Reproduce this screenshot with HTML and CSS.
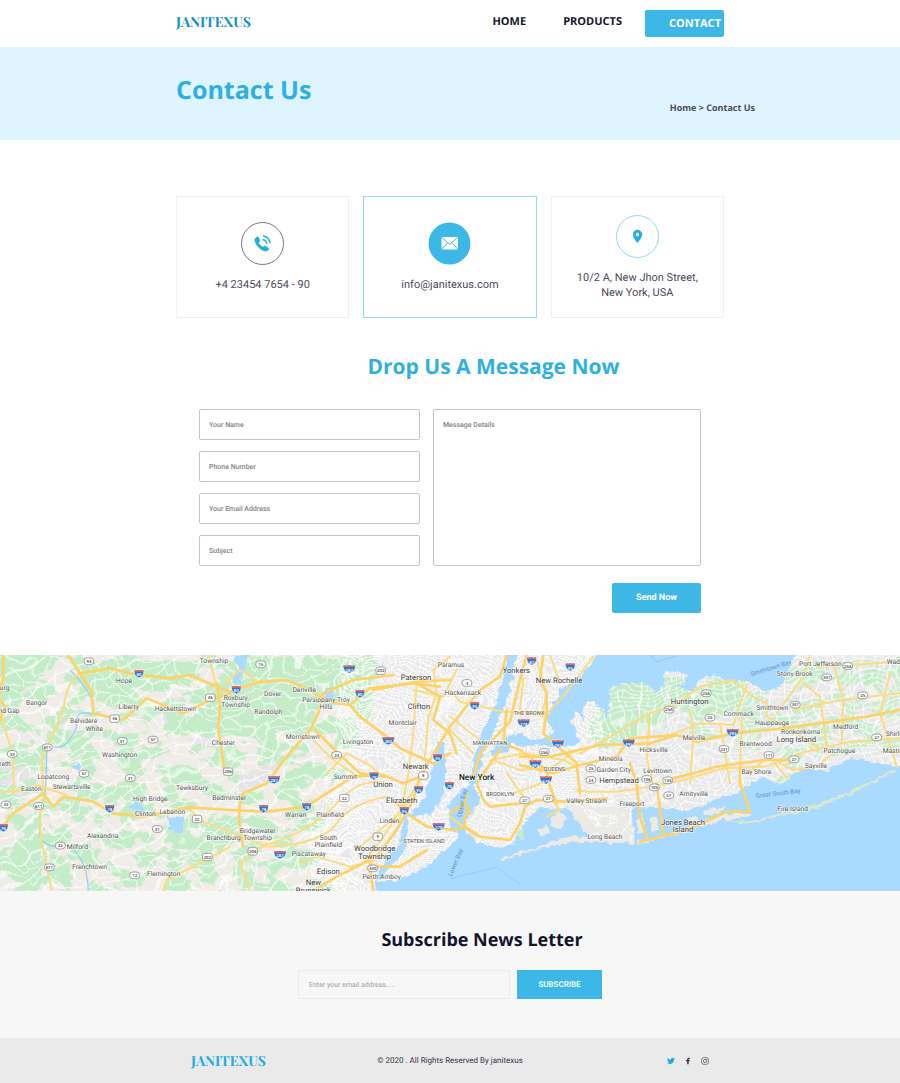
FILE: index.html
```html
<!DOCTYPE html>
<html lang="en">
<head>
<meta charset="utf-8">
<meta name="viewport" content="width=device-width, initial-scale=1">
<title>Janitexus - Contact Us</title>
<link rel="stylesheet" href="styles.css">
</head>
<body>
<header class="header">
  <div class="container header-row">
    <a class="logo logo-top" href="#">JANITEXUS</a>
    <nav class="nav">
      <a href="#">HOME</a>
      <a href="#">PRODUCTS</a>
      <a class="nav-button" href="#">CONTACT</a>
    </nav>
  </div>
</header>
<main>
  <section class="banner">
    <div class="container banner-row">
      <h1 class="banner-title">Contact Us</h1>
      <p class="crumbs"><a href="#">Home</a> &gt; Contact Us</p>
    </div>
  </section>

  <section class="container cards">
    <article class="card">
      <svg class="card-icon" viewBox="0 0 43 43" aria-hidden="true">
        <circle cx="21.500" cy="21.500" r="21" fill="#fff" stroke="#77757f"/>
        <path d="M15.300 15.600c-2 1.300-1.500 4.100.1 6.700 2 3.300 5 5.900 8.300 6.600 1.900.4 3.500-.5 3.900-1.700.1-.5 0-.8-.4-1.100l-3-1.800c-.5-.3-1-.2-1.400.2l-.8.8c-2-.8-3.800-2.700-4.600-4.700l.9-.7c.5-.4.6-.8.4-1.400l-1.200-3c-.4-.8-1.400-.6-2.200.1z" fill="#22ace1" stroke="#22ace1" stroke-width=".8"/>
        <path d="M21.500 17.500c2.600.4 3.800 2 4.200 4.300M22 14c4.400.6 6.700 3.300 7.200 7.300" fill="none" stroke="#22ace1" stroke-width="1.300"/>
      </svg>
      <p>+4 23454 7654 - 90</p>
    </article>
    <article class="card card-active">
      <svg class="card-icon" viewBox="0 0 43 43" aria-hidden="true">
        <circle cx="21.500" cy="21.500" r="21" fill="#3db7e6"/>
        <rect x="13.500" y="15" width="16.500" height="12.500" rx="1" fill="#fff"/>
        <path d="M14 15.500l7.800 7 7.800-7M14 27l5.600-6.300M29.600 27L24 20.700" fill="none" stroke="#3db7e6"/>
      </svg>
      <p>info@janitexus.com</p>
    </article>
    <article class="card">
      <svg class="card-icon" viewBox="0 0 43 43" aria-hidden="true">
        <circle cx="21.500" cy="21.500" r="21" fill="#fff" stroke="#94d9f3"/>
        <path d="M21.500 14.800a4.600 4.600 0 0 0-4.600 4.600c0 3.200 4.600 8.600 4.600 8.600s4.600-5.400 4.600-8.600a4.600 4.600 0 0 0-4.600-4.600zm0 6.500a1.800 1.800 0 1 1 0-3.600 1.800 1.800 0 0 1 0 3.600z" fill="#22ace1"/>
      </svg>
      <p>10/2 A, New Jhon Street,<br>New York, USA</p>
    </article>
  </section>

  <section class="message">
    <h2 class="message-title">Drop Us A Message Now</h2>
    <form class="message-form">
      <div class="message-fields">
        <input type="text" placeholder="Your Name" aria-label="Your Name">
        <input type="tel" placeholder="Phone Number" aria-label="Phone Number">
        <input type="email" placeholder="Your Email Address" aria-label="Your Email Address">
        <input type="text" placeholder="Subject" aria-label="Subject">
      </div>
      <textarea placeholder="Message Details" aria-label="Message Details"></textarea>
      <button class="send" type="submit">Send Now</button>
    </form>
  </section>

  <svg class="map" viewBox="0 15 2700 708" role="img" aria-label="Map of New York and surroundings">
    <defs>
      <filter id="patches" x="0" y="0" width="100%" height="100%" color-interpolation-filters="sRGB">
        <feTurbulence type="fractalNoise" baseFrequency="0.014 0.020" numOctaves="3" seed="8"/>
        <feColorMatrix values="0 0 0 0 .77  0 0 0 0 .925  0 0 0 0 .785  16 0 0 0 -7.500"/>
        <feComposite in2="SourceGraphic" operator="in"/>
      </filter>
      <filter id="wobble" x="0" y="0" width="100%" height="100%" color-interpolation-filters="sRGB">
        <feTurbulence type="fractalNoise" baseFrequency="0.009" numOctaves="2" seed="4"/>
        <feDisplacementMap in="SourceGraphic" scale="130" xChannelSelector="R" yChannelSelector="G"/>
      </filter>
      <filter id="coast" x="-5%" y="-5%" width="110%" height="110%" color-interpolation-filters="sRGB">
        <feTurbulence type="fractalNoise" baseFrequency="0.045" numOctaves="2" seed="2"/>
        <feDisplacementMap in="SourceGraphic" scale="22" xChannelSelector="R" yChannelSelector="G"/>
      </filter>
      <pattern id="rural" width="84" height="70" patternUnits="userSpaceOnUse" patternTransform="rotate(-28)">
        <path d="M0 12h84M20 0v36M20 36L60 70M60 0V44H84M0 50L20 36" fill="none" stroke="#fff" stroke-width="3"/>
      </pattern>
      <pattern id="urban" width="26" height="22" patternUnits="userSpaceOnUse" patternTransform="rotate(22)">
        <path d="M0 4h26M8 0v22M0 15h26M21 4v11" fill="none" stroke="#fff" stroke-width="3"/>
      </pattern>
      <pattern id="suburb" width="46" height="38" patternUnits="userSpaceOnUse" patternTransform="rotate(-9)">
        <path d="M0 6h46M13 0v38M0 26h46M35 6v20" fill="none" stroke="#fff" stroke-width="3"/>
      </pattern>
      <g id="interstate">
        <path d="M-13-12q6 3 13 0q7 3 13 0q6 17-13 25q-19-8-13-25z" fill="#3276c8" stroke="#fff" stroke-width="2"/>
        <path d="M-13-12q6 3 13 0q7 3 13 0l1 6h-28z" fill="#df6960"/>
      </g>
      <g id="interstate-wide">
        <path d="M-17-12q9 3 17 0q8 3 17 0q6 17-17 25q-23-8-17-25z" fill="#3276c8" stroke="#fff" stroke-width="2"/>
        <path d="M-17-12q9 3 17 0q8 3 17 0l1 6h-36z" fill="#df6960"/>
      </g>
      <rect id="oval" x="-15" y="-10" width="30" height="20" rx="10" fill="#fff" stroke="#777" stroke-width="2"/>
      <rect id="badge" x="-14" y="-11" width="28" height="22" rx="6" fill="#fff" stroke="#777" stroke-width="2"/>
    </defs>

    <rect y="15" width="2700" height="708" fill="#f0ede8"/>
    <path d="M1060 15H2700V723H1060L1000 560 960 440 1060 300z" fill="#e9e9ea"/>
    <g fill="#e5e5e8">
      <path d="M0 300L60 300 90 370 130 420 60 450 0 430z"/>
      <path d="M480 210l60-60 20 20-50 55zM560 265h115v30H580z"/>
    </g>

    <g filter="url(#coast)" fill="#c5ebc9">
      <path d="M0 15H190L150 60 80 110 20 180-10 190z"/>
      <path d="M675 60L760 20H1140L1130 60 1080 120 1110 170 960 150 930 250 830 200 780 265 600 255 560 220 640 150z"/>
      <path d="M230 40L330 30 600 35 560 100 400 110 350 180 290 150z"/>
      <path d="M50 580l60-30 30 70-20 90-70-10-50-40zM620 560l60-40 40 30-60 60z"/>
      <path d="M860 365l70-30 40 10-70 50-60 10zM1020 220l60 20-30 60-50-20z"/>
      <path d="M1820 110l120-30 60 30-10 90-100 70-90 30-40-60zM2000 80l60 0 20 70 60-60 100 0-30 90-120 20-80-30z"/>
      <path d="M2350 290l50 10 10 60-60-10zM2590 60l60 0v50h-60zM2420 40l60-10 0 60-50 10z"/>
      <path d="M2330 385l50-15-10 40-40 0z"/>
    </g>
    <path d="M0 15H1160L1100 230 1000 440 960 560 1000 723H0z" fill="#c5ebc9" filter="url(#patches)"/>
    <path d="M1820 90L2020 80 2160 70 2700 20V300L2400 330 2000 240 1780 280z" fill="#c5ebc9" filter="url(#patches)" opacity=".75"/>
    <path d="M720 380l100-50 20 25-70 65-60 10z" fill="#e5e5e8" filter="url(#coast)"/>

    <g filter="url(#wobble)">
      <rect x="-100" y="-60" width="1190" height="880" fill="url(#rural)"/>
      <path d="M1060-60H1800V320L1850 300V520L1700 820H960L940 560 1000 350z" fill="url(#urban)"/>
      <path d="M1780-60H2850V600H1780z" fill="url(#suburb)"/>
    </g>

    <g filter="url(#coast)" fill="#aadaff">
      <path d="M1795 5L1775 40 1720 95 1680 120 1660 160 1640 205 1660 245 1640 265 1600 270 1560 250 1530 275 1560 290 1600 285 1660 290 1700 290 1740 275 1712 210 1730 185 1755 205 1745 165 1780 152 1810 180 1820 210 1832 112 1860 102 1930 98 1970 125 1992 110 1998 60 2065 75 2055 100 2020 105 2080 125 2100 90 2140 70 2190 95 2250 90 2290 125 2330 115 2355 80 2390 5z"/>
      <path d="M1525 5L1556 5 1538 70 1525 150 1490 220 1448 310 1438 370 1422 410 1440 450 1420 490 1395 508 1390 545 1430 575 1500 592 1540 582 1562 530 1620 472 1655 480 1700 470 1740 520 1790 570 1900 582 1900 470 2070 482 2150 450 2225 420 2280 380 2345 404 2380 372 2410 355 2480 360 2560 325 2720 355V745H1130L1125 695 1190 692 1240 672 1290 640 1350 590 1380 545 1345 535 1348 500 1345 470 1360 440 1410 400 1420 330 1450 230 1490 160z"/>
      <path d="M1315 280l15-5 10 70-10 90-40 60-70 8 50-50 25-85z"/>
      <path d="M1210 500l14 0-5 100-40 40-40 50-14 0 34-60 40-50z"/>
      <path d="M1470 320l40-10 40-45-5-20-30 25-25 10zM700 15h48l-30 90-20-5 15-50zM975 120l22-10 5 30-15 30-15-10z"/>
      <path d="M500 500l55 5-15 45-30-10zM385 470l20-18 30 20-10 30zM212 350l20-14 12 15-10 12z"/>
    </g>
    <path d="M210 60Q270 120 278 160T270 190Q220 180 230 230 200 300 165 290M140 290Q140 420 130 450 115 480 120 560 140 600 195 585 260 610 265 720" fill="none" stroke="#9dcff3" stroke-width="4"/>

    <g filter="url(#coast)" fill="#eceae4">
      <path d="M1502 625L1620 588 1710 558 1900 572 1900 580 1720 575 1600 600 1510 632z"/>
      <path d="M1905 580L1990 555 2180 490 2250 488 2248 498 2130 520 2000 562 1920 582z"/>
      <path d="M2180 512L2240 515 2350 490 2450 465 2560 420 2690 355V362L2560 430 2450 475 2340 500 2240 522z" fill="#dbe8cf"/>
      <path d="M1650 500l30-20 15 25-15 35-20-10zM1620 540l20-20 10 30-30 10zM1800 500l30 5-5 20-20 5zM1850 490l40 20-10 30-30-10zM1910 510l15-20 10 50-20 10zM1950 500l20 0 5 40-20 10zM2060 500l30-5 5 20-30 5zM2110 480l60-10-10 20-50 10zM1700 460l40 10 50 60 60 0 40 40-60 0-80-30zM1760 470l130 0 0 20-90 5z"/>
      <path d="M1547 543l18-8 8 30-14 10z" fill="#c5ebc9"/>
    </g>

    <g class="road-thin">
      <path d="M0 185L40 320V430M0 425L100 420 110 405 200 435M240 70Q200 90 190 180L145 285 125 330 130 430M130 440Q110 520 130 600L155 723M625 15L650 110M675 100L720 60 780 100"/>
      <path d="M570 480L610 515 690 545 800 590M490 723L500 690 620 630 690 590M800 580L720 640 750 723"/>
      <path d="M980 370L1040 310 1100 340 1150 380M940 270L1000 330 1060 370M800 585Q940 540 1010 460T1160 400M810 590Q970 580 1010 520T1160 440"/>
      <path d="M900 640L950 620 1050 650 1090 640 1150 560 1260 390M1080 590L1210 480 1290 330M1100 660L1195 530 1225 370 1240 250 1250 100"/>
      <path d="M1275 320L1285 200 1310 130 1300 60 1350 20M1240 120L1330 140 1370 60M1350 120L1380 155 1510 185 1640 190"/>
      <path d="M1470 330L1570 310 1690 330 1730 350M1480 330L1560 360 1660 350 1730 300M1520 370L1570 440M1650 390L1540 430"/>
      <path d="M1570 85L1560 180 1630 200 1690 140 1780 20M1610 30L1640 130 1625 200M1650 15L1680 100"/>
      <path d="M1350 240L1420 310M1350 200L1440 270M1650 440L1680 480 1640 500"/>
      <path d="M1730 420L1760 425 1850 425 1950 410 2050 390 2170 355 2300 350 2400 310 2550 275 2700 265"/>
      <path d="M1740 310L1830 260 1950 190 2030 160 2100 110 2200 90 2260 140 2300 160M1950 190L1940 320 1960 410"/>
      <path d="M2010 255L2100 220 2200 225 2240 105M2070 180L2080 260 2070 400M2160 220L2190 400M2225 200L2220 380M2300 150V200L2390 250 2450 290"/>
      <path d="M2330 190L2410 80 2430 15M2410 100L2460 140 2480 290M2500 40L2530 150 2525 280M2380 180L2520 150 2700 130M2450 50L2700 35M2670 70L2640 190 2690 350"/>
      <path d="M2240 370L2310 320 2360 385M2340 340L2380 360 2450 350 2500 310M1350 500L1430 560"/>
    </g>
    <g class="road">
      <path d="M205 15L240 70 275 125 280 190 370 210 440 145 550 190 640 145 690 130"/>
      <path d="M240 70L330 55 400 72 510 85 570 75 650 110 690 125 780 95 860 90 930 120 980 155 1050 165 1110 115 1240 100 1320 110"/>
      <path d="M0 540L40 490 130 430 160 470 190 440 280 455 340 490 430 500 570 472 690 480 800 485 920 470 980 430 1060 380 1150 375 1210 400 1260 380"/>
      <path d="M10 15V80L0 130M0 150L15 170 0 210M650 100L660 160 655 240 675 370"/>
      <path d="M730 590Q705 480 730 430L800 400 860 320 930 240 955 190 970 130 1060 90 1180 75"/>
      <path d="M945 240L1020 315 1080 370 1160 380M1050 165L1080 200 1160 260 1200 295 1300 340 1350 310"/>
      <path d="M1290 330L1350 230 1440 120 1500 80 1520 15M1120 120L1250 95 1350 90M1250 100L1320 140 1300 210 1350 250 1370 310"/>
      <path d="M940 722L1010 680 1080 645 1130 620 1190 540 1240 450 1260 380 1290 330M1110 610V660L1120 722M1110 650H1200L1280 600"/>
      <path d="M1180 450L1220 490 1280 530 1360 540 1395 530"/>
      <path d="M1350 490L1395 460 1400 430M1395 460L1410 490Q1390 480 1395 530L1440 560 1530 570 1560 520 1575 470 1610 450 1700 455 1820 445"/>
      <path d="M1420 380L1440 310 1530 215 1560 90 1580 15M1500 300L1430 400 1450 450 1470 470 1560 460"/>
      <path d="M1520 180L1510 280 1560 300 1640 360 1650 410 1670 460M1640 190L1630 250 1730 340 1740 430"/>
      <path d="M1560 320L1650 320 1800 285 1950 280 2030 255 2090 275 2200 250 2350 235 2460 220 2600 200 2700 180"/>
      <path d="M1560 345L1660 370 1740 345 1850 320 1890 265 2030 255M1630 15L1620 90 1640 130 1640 200"/>
      <path d="M2020 385L2080 370 2150 350 2290 330 2370 330"/>
      <path d="M1890 340L1910 400 1920 500 1940 560M1970 400L1990 550M2220 350V400L2248 480M1920 575L2060 540 2180 485 2250 485"/>
    </g>
    <path d="M1350 686L1490 652 1562 705M1950 15L1968 35 2030 18" fill="none" stroke="#91bfe2" stroke-width="2"/>

    <g class="shields">
      <use href="#oval" x="267" y="34"/><text x="267" y="39">94</text>
      <use href="#interstate" x="417" y="71"/><text class="inv" x="417" y="79">80</text>
      <use href="#badge" x="344" y="206"/><text x="344" y="211">46</text>
      <use href="#badge" x="631" y="143"/><text x="631" y="148">46</text>
      <use href="#oval" x="367" y="273"/><text x="367" y="278">31</text>
      <use href="#oval" x="459" y="269"/><text x="459" y="274">57</text>
      <use href="#oval" x="142" y="292"/><text x="142" y="297">611</text>
      <use href="#oval" x="37" y="312"/><text x="37" y="317">33</text>
      <use href="#oval" x="252" y="371"/><text x="252" y="376">57</text>
      <use href="#oval" x="391" y="384"/><text x="391" y="389">31</text>
      <use href="#oval" x="18" y="464"/><text x="18" y="469">33</text>
      <use href="#oval" x="116" y="468"/><text x="116" y="473">611</text>
      <use href="#interstate" x="329" y="476"/><text class="inv" x="329" y="484">78</text>
      <use href="#interstate" x="10" y="533"/><text class="inv" x="10" y="541">78</text>
      <use href="#badge" x="591" y="507"/><text x="591" y="512">22</text>
      <use href="#oval" x="472" y="537"/><text x="472" y="542">31</text>
      <use href="#oval" x="181" y="587"/><text x="181" y="592">32</text>
      <use href="#oval" x="148" y="652"/><text x="148" y="657">611</text>
      <use href="#badge" x="622" y="621"/><text x="622" y="626">202</text>
      <use href="#oval" x="404" y="676"/><text x="404" y="681">12</text>
      <use href="#oval" x="782" y="43"/><text x="782" y="48">15</text>
      <use href="#interstate" x="709" y="119"/><text class="inv" x="709" y="127">80</text>
      <use href="#interstate-wide" x="1048" y="57"/><text class="inv" x="1048" y="65">287</text>
      <use href="#badge" x="1142" y="62"/><text x="1142" y="67">202</text>
      <use href="#interstate" x="1080" y="131"/><text class="inv" x="1080" y="139">80</text>
      <use href="#interstate-wide" x="1165" y="272"/><text class="inv" x="1165" y="280">280</text>
      <use href="#oval" x="1010" y="315"/><text x="1010" y="320">24</text>
      <use href="#interstate" x="1313" y="323"/><text class="inv" x="1313" y="331">95</text>
      <use href="#badge" x="684" y="365"/><text x="684" y="370">206</text>
      <use href="#badge" x="1270" y="377"/><text x="1270" y="382">9</text>
      <use href="#interstate-wide" x="822" y="389"/><text class="inv" x="822" y="397">287</text>
      <use href="#interstate" x="1122" y="378"/><text class="inv" x="1122" y="386">78</text>
      <use href="#interstate" x="1348" y="407"/><text class="inv" x="1348" y="415">78</text>
      <use href="#interstate" x="1256" y="419"/><text class="inv" x="1256" y="427">95</text>
      <use href="#badge" x="1033" y="444"/><text x="1033" y="449">22</text>
      <use href="#interstate" x="791" y="476"/><text class="inv" x="791" y="484">78</text>
      <use href="#interstate" x="920" y="470"/><text class="inv" x="920" y="478">78</text>
      <use href="#interstate" x="1213" y="482"/><text class="inv" x="1213" y="490">95</text>
      <use href="#interstate-wide" x="1316" y="530"/><text class="inv" x="1316" y="538">278</text>
      <use href="#badge" x="1133" y="560"/><text x="1133" y="565">9</text>
      <use href="#badge" x="758" y="604"/><text x="758" y="609">206</text>
      <use href="#interstate-wide" x="840" y="614"/><text class="inv" x="840" y="622">287</text>
      <use href="#oval" x="1118" y="655"/><text x="1118" y="660">440</text>
      <use href="#interstate" x="1595" y="33"/><text class="inv" x="1595" y="41">87</text>
      <use href="#interstate" x="1711" y="51"/><text class="inv" x="1711" y="59">95</text>
      <use href="#oval" x="1401" y="99"/><text x="1401" y="104">4</text>
      <use href="#interstate" x="1424" y="167"/><text class="inv" x="1424" y="175">95</text>
      <use href="#interstate-wide" x="1571" y="219"/><text class="inv" x="1571" y="227">278</text>
      <use href="#oval" x="1633" y="306"/><text x="1633" y="311">25A</text>
      <use href="#interstate-wide" x="1674" y="282"/><text class="inv" x="1674" y="290">295</text>
      <use href="#interstate-wide" x="1886" y="279"/><text class="inv" x="1886" y="287">495</text>
      <use href="#interstate-wide" x="1606" y="342"/><text class="inv" x="1606" y="350">495</text>
      <use href="#interstate-wide" x="1638" y="390"/><text class="inv" x="1638" y="398">678</text>
      <use href="#oval" x="1773" y="355"/><text x="1773" y="360">25</text>
      <use href="#oval" x="1773" y="390"/><text x="1773" y="395">24</text>
      <use href="#oval" x="1940" y="387"/><text x="1940" y="392">106</text>
      <use href="#oval" x="1963" y="412"/><text x="1963" y="417">105</text>
      <use href="#oval" x="2003" y="391"/><text x="2003" y="396">135</text>
      <use href="#oval" x="2006" y="436"/><text x="2006" y="441">27</text>
      <use href="#oval" x="1574" y="451"/><text x="1574" y="456">27</text>
      <use href="#oval" x="1645" y="446"/><text x="1645" y="451">27</text>
      <use href="#oval" x="2007" y="179"/><text x="2007" y="184">25A</text>
      <use href="#oval" x="2119" y="130"/><text x="2119" y="135">25A</text>
      <use href="#oval" x="2130" y="203"/><text x="2130" y="208">25</text>
      <use href="#interstate-wide" x="2198" y="248"/><text class="inv" x="2198" y="256">495</text>
      <use href="#oval" x="2172" y="297"/><text x="2172" y="302">231</text>
      <use href="#oval" x="2307" y="315"/><text x="2307" y="320">111</text>
      <use href="#oval" x="2382" y="328"/><text x="2382" y="333">27</text>
      <use href="#oval" x="2386" y="164"/><text x="2386" y="169">347</text>
      <use href="#oval" x="2480" y="82"/><text x="2480" y="87">347</text>
      <use href="#oval" x="2543" y="48"/><text x="2543" y="53">25A</text>
      <use href="#oval" x="2588" y="136"/><text x="2588" y="141">25</text>
      <use href="#oval" x="2630" y="262"/><text x="2630" y="267">27</text>
    </g>

    <g class="places">
      <text x="372" y="100">Hope</text><text x="110" y="165">Bangor</text><text x="14" y="121">urg</text><text x="27" y="190">nd Gap</text>
      <text x="386" y="177">Liberty</text><text x="526" y="184">Hackettstown</text><text x="251" y="218">Belvidere</text><text x="283" y="244">White</text>
      <text x="359" y="322">Washington</text><text x="15" y="348">reth</text><text x="160" y="388">Lopatcong</text><text x="94" y="423">Easton</text>
      <text x="215" y="416">Stewartsville</text><text x="451" y="454">High Bridge</text><text x="436" y="498">Clinton</text><text x="517" y="491">Lebanon</text>
      <text x="576" y="419">Tewksbury</text><text x="308" y="565">Alexandria</text><text x="232" y="597">Milford</text><text x="269" y="658">Frenchtown</text>
      <text x="491" y="679">Flemington</text><text x="642" y="38">Township</text><text x="670" y="285">Chester</text><text x="688" y="450">Bedminster</text>
      <text x="671" y="570">Branchburg</text><text x="707" y="150">Roxbury</text><text x="707" y="170">Township</text><text x="818" y="139">Dover</text>
      <text x="913" y="127">Denville</text><text x="978" y="156">Parsippany-Troy</text><text x="978" y="177">Hills</text><text x="805" y="192">Randolph</text>
      <text x="908" y="266">Morristown</text><text x="1074" y="281">Livingston</text><text x="1208" y="224">Montclair</text><text x="1036" y="386">Summit</text>
      <text x="887" y="502">Warren</text><text x="990" y="502">Plainfield</text><text x="1168" y="520">Linden</text><text x="773" y="550">Bridgewater</text>
      <text x="773" y="571">Township</text><text x="985" y="571">South</text><text x="985" y="592">Plainfield</text><text x="926" y="617">Piscataway</text>
      <text x="1145" y="686">Perth Amboy</text><text x="1353" y="50">Paramus</text><text x="1389" y="136">Hackensack</text>
      <text x="1961" y="306">Hicksville</text><text x="1832" y="334">Mineola</text><text x="1841" y="367">Garden City</text><text x="1973" y="369">Levittown</text>
      <text x="1760" y="458">Valley Stream</text><text x="1896" y="467">Freeport</text><text x="1815" y="568">Long Beach</text>
      <text x="2216" y="198">Commack</text><text x="2082" y="270">Melville</text><text x="2267" y="288">Brentwood</text><text x="2317" y="180">Smithtown</text>
      <text x="2316" y="224">Hauppauge</text><text x="2402" y="251">Ronkonkoma</text><text x="2384" y="78">Stony Brook</text><text x="2461" y="48">Port Jefferson</text>
      <text x="2537" y="236">Medford</text><text x="2518" y="310">Patchogue</text><text x="2448" y="354">Sayville</text><text x="2269" y="371">Bay Shore</text>
      <text x="2081" y="437">Amityville</text><text x="2378" y="482">Fire Island</text>
      <text class="from-left" x="2660" y="42">Wadi</text><text class="from-left" x="2658" y="258">Shirle</text><text class="from-left" x="2648" y="310">Mastic</text>
    </g>
    <g class="places cities">
      <text x="1248" y="91">Paterson</text><text x="1257" y="177">Clifton</text><text x="1247" y="356">Newark</text><text x="1149" y="411">Union</text>
      <text x="1205" y="459">Elizabeth</text><text x="1124" y="602">Woodbridge</text><text x="1124" y="626">Township</text><text x="985" y="671">Edison</text>
      <text x="940" y="705">New</text><text x="940" y="728">Brunswick</text><text x="1549" y="70">Yonkers</text><text x="1677" y="99">New Rochelle</text>
      <text x="1857" y="398">Hempstead</text><text x="2069" y="163">Huntington</text><text x="2389" y="277">Long Island</text><text x="2049" y="525">Jones Beach</text><text x="2049" y="547">Island</text>
    </g>
    <g class="places boroughs">
      <text x="1587" y="194">THE BRONX</text><text x="1470" y="285">MANHATTAN</text><text x="1663" y="364">QUEENS</text><text x="1500" y="437">BROOKLYN</text><text x="1272" y="579">STATEN ISLAND</text>
    </g>
    <g class="places metro"><text x="1430" y="389">New York</text></g>
    <g class="water-names">
      <text transform="translate(1392 460) rotate(-78)">Upper Bay</text>
      <text transform="translate(1372 640) rotate(-68)">Lower Bay</text>
      <text transform="translate(2315 60) rotate(-17)">Smithtown Bay</text>
      <text transform="translate(2335 436) rotate(-7)">Great South Bay</text>
    </g>
  </svg>

  <section class="newsletter">
    <h2 class="newsletter-title">Subscribe News Letter</h2>
    <form class="newsletter-form">
      <input type="email" placeholder="Enter your email address....." aria-label="Email address">
      <button type="submit">SUBSCRIBE</button>
    </form>
  </section>
</main>
<footer class="footer">
  <div class="footer-row">
    <a class="logo" href="#">JANITEXUS</a>
    <p class="copyright">© 2020 . All Rights Reserved By janitexus</p>
    <div class="social">
      <a href="#" aria-label="Twitter"><svg viewBox="0 0 24 24"><path fill="#27aae1" d="M24 4.600a10 10 0 0 1-2.800.8 5 5 0 0 0 2.100-2.700 10 10 0 0 1-3.100 1.200 4.900 4.900 0 0 0-8.400 4.500A14 14 0 0 1 1.700 3.200a4.900 4.900 0 0 0 1.500 6.500 5 5 0 0 1-2.200-.6 4.900 4.900 0 0 0 3.900 4.900 5 5 0 0 1-2.200.1 4.900 4.900 0 0 0 4.600 3.400A9.900 9.900 0 0 1 0 19.500 14 14 0 0 0 21.500 7.100 10 10 0 0 0 24 4.600z"/></svg></a>
      <a href="#" aria-label="Facebook"><svg viewBox="0 0 24 24"><path fill="#34344e" d="M9.500 22V13H6V9h3.500V6.800C9.500 3.600 11.600 2 15 2c1.600 0 2.600.2 2.600.2v3.400h-1.600c-1.500 0-2 .8-2 1.900V9h3.600l-.6 4H14v9z"/></svg></a>
      <a href="#" aria-label="Instagram"><svg viewBox="0 0 24 24" fill="none" stroke="#4a4a60" stroke-width="2"><rect x="2" y="2" width="20" height="20" rx="6"/><circle cx="12" cy="12" r="4.800"/><circle cx="17.500" cy="6.500" r=".6"/></svg></a>
    </div>
  </div>
</footer>
</body>
</html>
```

FILE: styles.css
```css
* { box-sizing: border-box; }

body {
  margin: 0;
  background: #fff;
  color: #4d4b5d;
  font-family: Roboto, "Liberation Sans", sans-serif;
  text-rendering: geometricPrecision;
}

h1, h2, p { margin: 0; }
a { color: inherit; text-decoration: none; }
button { border: 0; padding: 0; color: #fff; background: #3db7e6; cursor: pointer; }
input, textarea, button { font-family: inherit; text-rendering: inherit; }

.container {
  width: 100%;
  max-width: 548px;
  margin: 0 auto;
}

.logo {
  font-family: "Playfair Display", "Liberation Serif", serif;
  font-size: 14px;
  font-weight: 700;
  color: #22ace1;
}
.logo-top { color: #168ec8; }

.header-row {
  display: flex;
  justify-content: space-between;
  align-items: center;
  height: 47px;
  padding-bottom: 4px;
}
.nav {
  display: flex;
  align-items: center;
  font-family: "Open Sans", sans-serif;
  font-size: 11px;
  font-weight: 700;
  color: #14142d;
}
.nav a + a { margin-left: 37px; }
.nav .nav-button {
  margin-left: 23px;
  margin-top: 4px;
  padding: 0 3px 0 24px;
  border-radius: 2px;
  line-height: 27px;
  color: #fff;
  background: #3db7e6;
}

.banner { background: #def4ff; }
.banner-row {
  display: flex;
  justify-content: space-between;
  height: 93px;
  font-family: "Open Sans", sans-serif;
}
.banner-title {
  padding-top: 25px;
  font-size: 25px;
  line-height: 36px;
  color: #2fb0e0;
}
.crumbs {
  margin-right: -31px;
  padding-top: 54px;
  font-size: 9px;
  font-weight: 700;
  line-height: 14px;
}

.cards {
  display: grid;
  grid-template-columns: repeat(3, 1fr);
  gap: 14px;
  padding-top: 56px;
}
.card {
  display: flex;
  flex-direction: column;
  align-items: center;
  justify-content: center;
  gap: 12px;
  min-height: 122px;
  border: 1px solid #f0f0f0;
  font-size: 11px;
  line-height: 15px;
  text-align: center;
}
.card-active { border-color: #94d9f3; }
.card-icon { width: 43px; height: 43px; }

.message {
  padding: 32px 0 42px;
}
.message-title {
  padding-left: 87px;
  font-family: "Open Sans", sans-serif;
  font-size: 21px;
  line-height: 34px;
  text-align: center;
  color: #2fb0e0;
}
.message-form {
  display: grid;
  grid-template-columns: 221fr 268fr;
  column-gap: 13px;
  row-gap: 17px;
  max-width: 502px;
  margin: 25px auto 0;
}
.message-fields { display: grid; gap: 11px; }
.message-form input,
.message-form textarea {
  width: 100%;
  border: 1px solid #c6c6c6;
  border-radius: 2px;
  padding: 0 9px;
  font-size: 7px;
  font-weight: 500;
  background: #fff;
  color: #4d4b5d;
}
.message-form input { height: 31px; }
.message-form textarea { padding-top: 11px; resize: none; }
.message-form ::placeholder { color: #858585; opacity: 1; }
.send {
  grid-column: 2;
  justify-self: end;
  width: 89px;
  height: 30px;
  border-radius: 2px;
  font-size: 9px;
  font-weight: 700;
}

.map { display: block; width: 100%; height: auto; }
.road, .road-thin {
  fill: none;
  stroke: #fdd368;
  stroke-width: 8px;
  stroke-linejoin: round;
  stroke-linecap: round;
}
.road-thin { stroke-width: 6px; stroke: #fbdc82; }
.shields { font-size: 13px; font-weight: 500; text-anchor: middle; fill: #444; }
.shields .inv { fill: #fff; }
.places {
  font-size: 20px;
  text-anchor: middle;
  fill: #555;
  stroke: #fff;
  stroke-width: 4px;
  stroke-opacity: .7;
  paint-order: stroke;
}
.places .from-left { text-anchor: start; }
.cities { font-size: 23px; fill: #3c3c3c; }
.boroughs { font-size: 17px; }
.metro { font-size: 25px; font-weight: 500; fill: #111; }
.water-names { font-size: 19px; text-anchor: middle; fill: #5b94cf; }

.newsletter {
  padding: 33px 0 39px;
  background: #f7f7f7;
}
.newsletter-title {
  padding-left: 64px;
  font-family: "Open Sans", sans-serif;
  font-size: 18px;
  line-height: 32px;
  text-align: center;
  color: #14142d;
}
.newsletter-form {
  display: flex;
  gap: 7px;
  max-width: 304px;
  margin: 14px auto 0;
}
.newsletter-form input {
  flex: 1;
  min-width: 0;
  height: 29px;
  border: 1px solid #ececec;
  padding: 0 10px;
  font-size: 7px;
  background: transparent;
}
.newsletter-form ::placeholder { color: #a0a0a0; opacity: 1; }
.newsletter-form button { width: 85px; font-size: 8px; font-weight: 500; }

.footer { background: #eaeaea; }
.footer-row {
  display: grid;
  grid-template-columns: 1fr auto 1fr;
  align-items: center;
  max-width: 518px;
  min-height: 45px;
  margin: 0 auto;
}
.copyright { font-size: 8px; color: #34344e; }
.social { display: flex; justify-content: flex-end; gap: 9px; }
.social svg { display: block; width: 8px; height: 8px; }
```
